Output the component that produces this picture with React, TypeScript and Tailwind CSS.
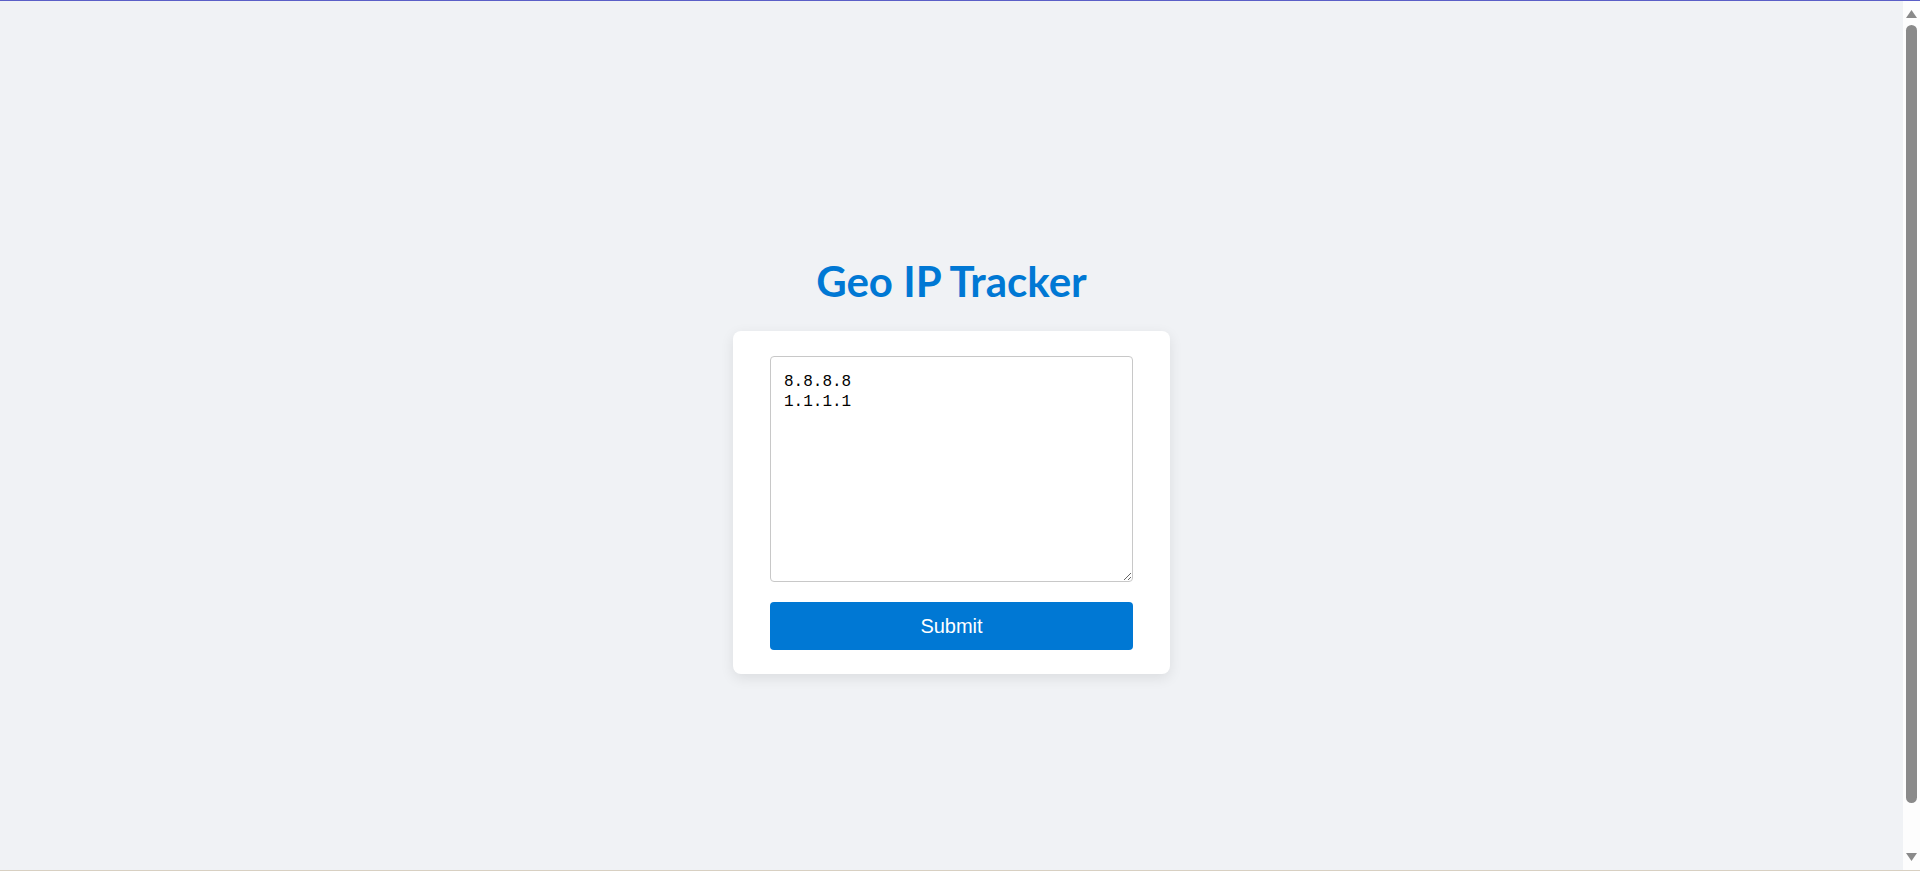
import { useState } from 'react';

function Scrollbar() {
  return (
    <div className="w-[17px] bg-[#fdfdfd] flex flex-col items-center">
      {/* up arrow */}
      <div className="h-[17px] flex items-end justify-center">
        <svg width="11" height="8" viewBox="0 0 11 8">
          <path d="M5.5 0 L11 8 L0 8 Z" fill="#8a8a8a" />
        </svg>
      </div>
      <div className="mt-[7px] w-[11px] h-[778px] rounded-full bg-[#8a8a8a]" />
      <div className="flex-1" />
      {/* down arrow */}
      <div className="h-[17px] flex items-start justify-center">
        <svg width="11" height="8" viewBox="0 0 11 8">
          <path d="M0 0 L11 0 L5.5 8 Z" fill="#8a8a8a" />
        </svg>
      </div>
    </div>
  );
}

export default function App() {
  const [ips, setIps] = useState('8.8.8.8\n1.1.1.1');

  return (
    <div className="h-[871px] bg-[#f0f2f5] border-t border-b border-t-[#5b5fc7] border-b-[#d8d0c2] flex overflow-hidden">
      <main className="flex-1 flex flex-col items-center pt-[256px]">
        {/* Heading */}
        <h1 className="font-['Lato',_sans-serif] text-[42px] leading-[48px] font-bold text-[#0078d4] mb-[26px]">
          Geo IP Tracker
        </h1>

        {/* Card */}
        <div className="w-[437px] bg-white rounded-lg shadow-[0_4px_14px_rgba(0,0,0,0.09)] px-[37px] pt-[25px] pb-[24px] flex flex-col gap-[20px]">
          <textarea
            value={ips}
            onChange={(e) => setIps(e.target.value)}
            className="w-full h-[226px] border border-[#c8c8c8] rounded-[4px] px-[13px] pt-[15px] pb-[10px] font-['Liberation_Mono',_monospace] text-[16px] leading-[20px] text-black bg-white outline-none"
          />
          <button className="w-full h-[48px] bg-[#0078d4] text-white font-['Liberation_Sans',_Arial,_sans-serif] text-[20px] rounded-[4px]">
            Submit
          </button>
        </div>
      </main>
      <Scrollbar />
    </div>
  );
}
